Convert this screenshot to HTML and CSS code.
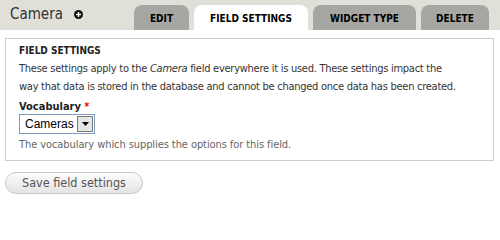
FILE: index.html
```html
<!DOCTYPE html>
<html>
<head>
<meta charset="utf-8">
<link rel="stylesheet" href="styles.css">
</head>
<body>
<div class="header">
  <h1 class="title">Camera <span class="add-icon"><svg width="9" height="9" viewBox="0 0 9 9"><circle cx="4.5" cy="4.5" r="4.5" fill="#111"/><rect x="2" y="3.8" width="5" height="1.4" fill="#fff"/><rect x="3.8" y="2" width="1.4" height="5" fill="#fff"/></svg></span></h1>
  <ul class="tabs">
    <li class="tab tab-edit">EDIT</li>
    <li class="tab tab-settings active">FIELD SETTINGS</li>
    <li class="tab tab-widget">WIDGET TYPE</li>
    <li class="tab tab-delete">DELETE</li>
  </ul>
</div>
<div class="content">
  <div class="fieldset">
    <div class="legend">FIELD SETTINGS</div>
    <p class="intro">These settings apply to the <em>Camera</em> field everywhere it is used. These settings impact the way that data is stored in the database and cannot be changed once data has been created.</p>
    <div class="label">Vocabulary <span class="req">*</span></div>
    <div class="select"><span class="select-text">Cameras</span><span class="select-btn"><svg width="7" height="4" viewBox="0 0 7 4"><polygon points="0,0 7,0 3.5,4" fill="#000"/></svg></span></div>
    <div class="desc">The vocabulary which supplies the options for this field.</div>
  </div>
  <div class="actions"><span class="button">Save field settings</span></div>
</div>
</body>
</html>
```
FILE: styles.css
```css
html, body {
  margin: 0;
  padding: 0;
  background: #fff;
}
body {
  font-family: "DejaVu Sans Condensed", "DejaVu Sans", sans-serif;
  font-stretch: condensed;
  font-size: 11px;
  color: #333;
}
.header {
  background: #e0e0d8;
  height: 30px;
  display: flex;
  align-items: flex-end;
  padding: 0 11px 0 10px;
}
.title {
  align-self: flex-start;
  margin: 5px 0 0 0;
  font-size: 15px;
  font-weight: normal;
  line-height: 18px;
  color: #333;
  display: flex;
  align-items: center;
}
.add-icon {
  display: inline-flex;
  margin-left: 11px;
  margin-top: 1px;
}
.tabs {
  list-style: none;
  margin: 0 0 0 auto;
  padding: 0;
  display: flex;
  gap: 5px;
}
.tab {
  box-sizing: border-box;
  height: 25px;
  padding: 8px 0 0 0;
  line-height: 12px;
  font-size: 10px;
  font-weight: bold;
  color: #000;
  background: #a6a7a2;
  border-radius: 8px 8px 0 0;
  text-align: center;
}
.tab-edit { width: 55px; }
.tab-settings { width: 114px; }
.tab-widget { width: 103px; }
.tab-delete { width: 68px; }
.tab.active {
  background: #fff;
}
.content {
  padding: 0 6px 0 5px;
}
.fieldset {
  margin-top: 8px;
  border: 1px solid #ccc;
  padding: 4px 13px 7px 13px;
}
.legend {
  font-size: 10px;
  font-weight: bold;
  line-height: 16px;
  color: #222;
}
.intro {
  margin: 1px 0 0 0;
  max-width: 440px;
  line-height: 18px;
  letter-spacing: -0.26px;
}
.label {
  margin-top: 4px;
  font-weight: bold;
  line-height: 14px;
  color: #222;
}
.req {
  color: #e00;
  font-size: 10px;
  vertical-align: top;
}
.select {
  box-sizing: border-box;
  width: 76px;
  height: 20px;
  border: 1px solid #7f9db9;
  display: flex;
  align-items: center;
  justify-content: space-between;
  padding: 0 1px 0 5px;
  font-family: "Liberation Sans", Arial, sans-serif;
  font-size: 12px;
  color: #000;
}
.select-btn {
  box-sizing: border-box;
  width: 16px;
  height: 16px;
  border: 1px solid #7a7a7a;
  background: #e6e6e6;
  display: flex;
  align-items: center;
  justify-content: center;
}
.desc {
  margin-top: 3px;
  line-height: 16px;
  color: #666;
  letter-spacing: -0.08px;
}
.actions {
  margin-top: 11px;
}
.button {
  box-sizing: border-box;
  display: inline-block;
  width: 138px;
  height: 22px;
  line-height: 20px;
  border: 1px solid #c8c8c8;
  border-radius: 11px;
  background: linear-gradient(#fcfcfc, #e4e4e4);
  color: #555;
  font-size: 12.5px;
  text-align: center;
}
```
